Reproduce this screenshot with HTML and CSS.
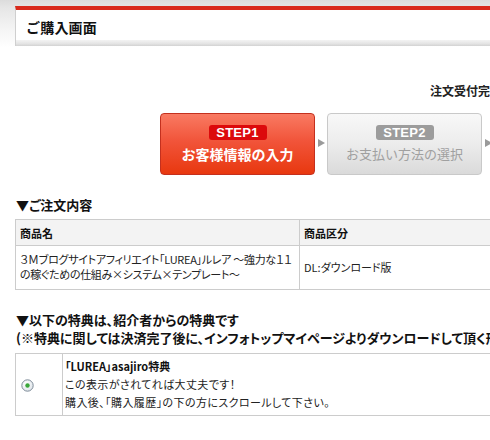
FILE: index.html
```html
<!DOCTYPE html>
<html lang="ja">
<head>
<meta charset="utf-8">
<title>ご購入画面</title>
<link rel="stylesheet" href="styles.css">
</head>
<body>
<div class="page">
  <div class="header">
    <div class="header-inner"><h1 class="title">ご購入画面</h1></div>
    <div class="header-foot"></div>
  </div>

  <div class="flow-note">注文受付完了</div>

  <div class="steps">
    <div class="step step-active">
      <span class="step-badge">STEP1</span>
      <span class="step-label">お客様情報の入力</span>
    </div>
    <span class="step-arrow"></span>
    <div class="step step-idle">
      <span class="step-badge">STEP2</span>
      <span class="step-label">お支払い方法の選択</span>
    </div>
    <span class="step-arrow"></span>
    <div class="step step-idle">
      <span class="step-badge">STEP3</span>
      <span class="step-label">注文受付完了</span>
    </div>
  </div>

  <h2 class="sec-title first">▼ご注文内容</h2>
  <table class="order">
    <tr class="head">
      <th class="c-name">商品名</th>
      <th class="c-kind">商品区分</th>
    </tr>
    <tr>
      <td class="c-name">３Ｍブログサイトアフィリエイト「LUREA」ルレア ～強力な１１<br>の稼ぐための仕組み×システム×テンプレート～</td>
      <td class="c-kind">DL:ダウンロード版</td>
    </tr>
  </table>

  <h2 class="sec-title second">▼以下の特典は、紹介者からの特典です</h2>
  <p class="sec-note">(※特典に関しては決済完了後に、インフォトップマイページよりダウンロードして頂く形となります。)</p>

  <table class="bonus">
    <tr>
      <td class="c-radio">
        <svg class="radio" width="13" height="13" viewBox="0 0 13 13">
          <defs>
            <radialGradient id="rg" cx="40%" cy="35%" r="70%">
              <stop offset="0" stop-color="#ffffff"/>
              <stop offset="1" stop-color="#dde3e8"/>
            </radialGradient>
          </defs>
          <circle cx="6.5" cy="6.5" r="5.7" fill="url(#rg)" stroke="#7f8c99" stroke-width="1"/>
          <circle cx="6.5" cy="6.5" r="2.2" fill="#3aa63a"/>
        </svg>
      </td>
      <td class="c-text">
        <div class="bonus-name">「LUREA」asajiro特典</div>
        <div class="bonus-line">この表示がされてれば大丈夫です！</div>
        <div class="bonus-line">購入後、「購入履歴」の下の方にスクロールして下さい。</div>
      </td>
    </tr>
  </table>
</div>
</body>
</html>
```

FILE: styles.css
```css
html, body {
  margin: 0;
  padding: 0;
}
body {
  overflow: hidden;
  background: linear-gradient(to bottom, #dcdcdc 0, #e6e6e6 8px, #f5f5f5 30px, #ffffff 48px) no-repeat;
  font-family: "Noto Sans CJK JP", "Liberation Sans", sans-serif;
  color: #111;
}
.page {
  width: 720px;
  padding-top: 6px;
}
.header {
  margin-left: 15px;
  border-top: 4px solid #d92a1c;
  border-left: 1px solid #cfcfcf;
  background: #fff;
}
.header-inner {
  height: 30px;
  display: flex;
  align-items: center;
  padding-left: 10px;
}
.header-foot {
  height: 6px;
  background: linear-gradient(to bottom, #f3f3f3 0, #e4e4e4 60%, #d2d2d2 100%);
}
.title {
  margin: 4px 0 0;
  font-size: 14px;
  font-weight: bold;
  line-height: 18px;
  letter-spacing: 0.2px;
}
.flow-note {
  margin: 38px 0 0 430px;
  font-size: 12px;
  font-weight: bold;
  line-height: 14px;
  color: #222;
  white-space: nowrap;
  font-feature-settings: "palt";
}
.steps {
  display: flex;
  align-items: center;
  margin: 15px 0 0 160px;
}
.step {
  flex: none;
  width: 155px;
  height: 62px;
  border-radius: 4px;
  display: flex;
  flex-direction: column;
  align-items: center;
  padding-top: 11px;
  box-sizing: border-box;
}
.step-active {
  background: linear-gradient(to bottom, #f97a62 0, #f1543a 45%, #e8380f 100%);
  border: 1px solid #c4301e;
}
.step-idle {
  background: linear-gradient(to bottom, #f8f8f8 0, #ececec 50%, #dadada 100%);
  border: 1px solid #c9c9c9;
}
.step-badge {
  display: block;
  width: 58px;
  height: 15px;
  border-radius: 3px;
  font-family: "Liberation Sans", Arial, sans-serif;
  font-weight: bold;
  font-size: 13px;
  line-height: 15px;
  text-align: center;
  color: #fff;
  letter-spacing: 0.3px;
}
.step-active .step-badge {
  background: #dc0a0c;
}
.step-idle .step-badge {
  background: #9c9c9c;
}
.step-label {
  display: block;
  margin-top: 5px;
  font-size: 14px;
  line-height: 18px;
  white-space: nowrap;
}
.step-active .step-label {
  color: #fff;
  font-weight: bold;
}
.step-idle .step-label {
  color: #a0a0a0;
  font-size: 13px;
}
.step-arrow {
  flex: none;
  width: 12px;
  height: 10px;
  display: flex;
  justify-content: center;
}
.step-arrow::before {
  content: "";
  width: 0;
  height: 0;
  margin-left: 1px;
  border-left: 7px solid #9a9a9a;
  border-top: 4px solid transparent;
  border-bottom: 4px solid transparent;
}
.sec-title {
  margin: 0 0 0 16px;
  font-size: 13px;
  font-weight: bold;
  line-height: 18px;
  white-space: nowrap;
  font-feature-settings: "palt";
}
.sec-title.first {
  margin-top: 21px;
}
.sec-title.second {
  margin-top: 21px;
}
.sec-note {
  margin: 0 0 0 16px;
  font-size: 13px;
  font-weight: bold;
  line-height: 18px;
  white-space: nowrap;
  font-feature-settings: "palt";
}
table {
  border-collapse: collapse;
  margin-left: 15px;
  width: 640px;
  table-layout: fixed;
}
.order {
  margin-top: 5px;
}
.order th, .order td {
  border: 1px solid #cccccc;
  text-align: left;
  vertical-align: middle;
  font-size: 11px;
  font-feature-settings: "palt";
}
.order th {
  background: #f3f3f3;
  height: 25px;
  padding: 0 4px;
  font-weight: bold;
  line-height: 14px;
}
.order td {
  padding: 6px 4px 7px;
  line-height: 15px;
  color: #222;
}
.order td.c-name {
  white-space: nowrap;
  letter-spacing: -0.3px;
}
.order .c-name {
  width: 284px;
  box-sizing: border-box;
}
.bonus {
  margin-top: 6px;
}
.bonus td {
  border: 1px solid #cccccc;
  vertical-align: middle;
  font-size: 11px;
  font-feature-settings: "palt";
}
.c-radio {
  width: 47px;
  padding: 0 0 0 5px;
  box-sizing: border-box;
}
.radio {
  display: block;
  margin-top: 2px;
}
.c-text {
  padding: 3px 2px 4px;
  line-height: 18px;
}
.bonus-name {
  font-weight: bold;
}
.bonus-line {
  color: #222;
  letter-spacing: 0.4px;
}
```
